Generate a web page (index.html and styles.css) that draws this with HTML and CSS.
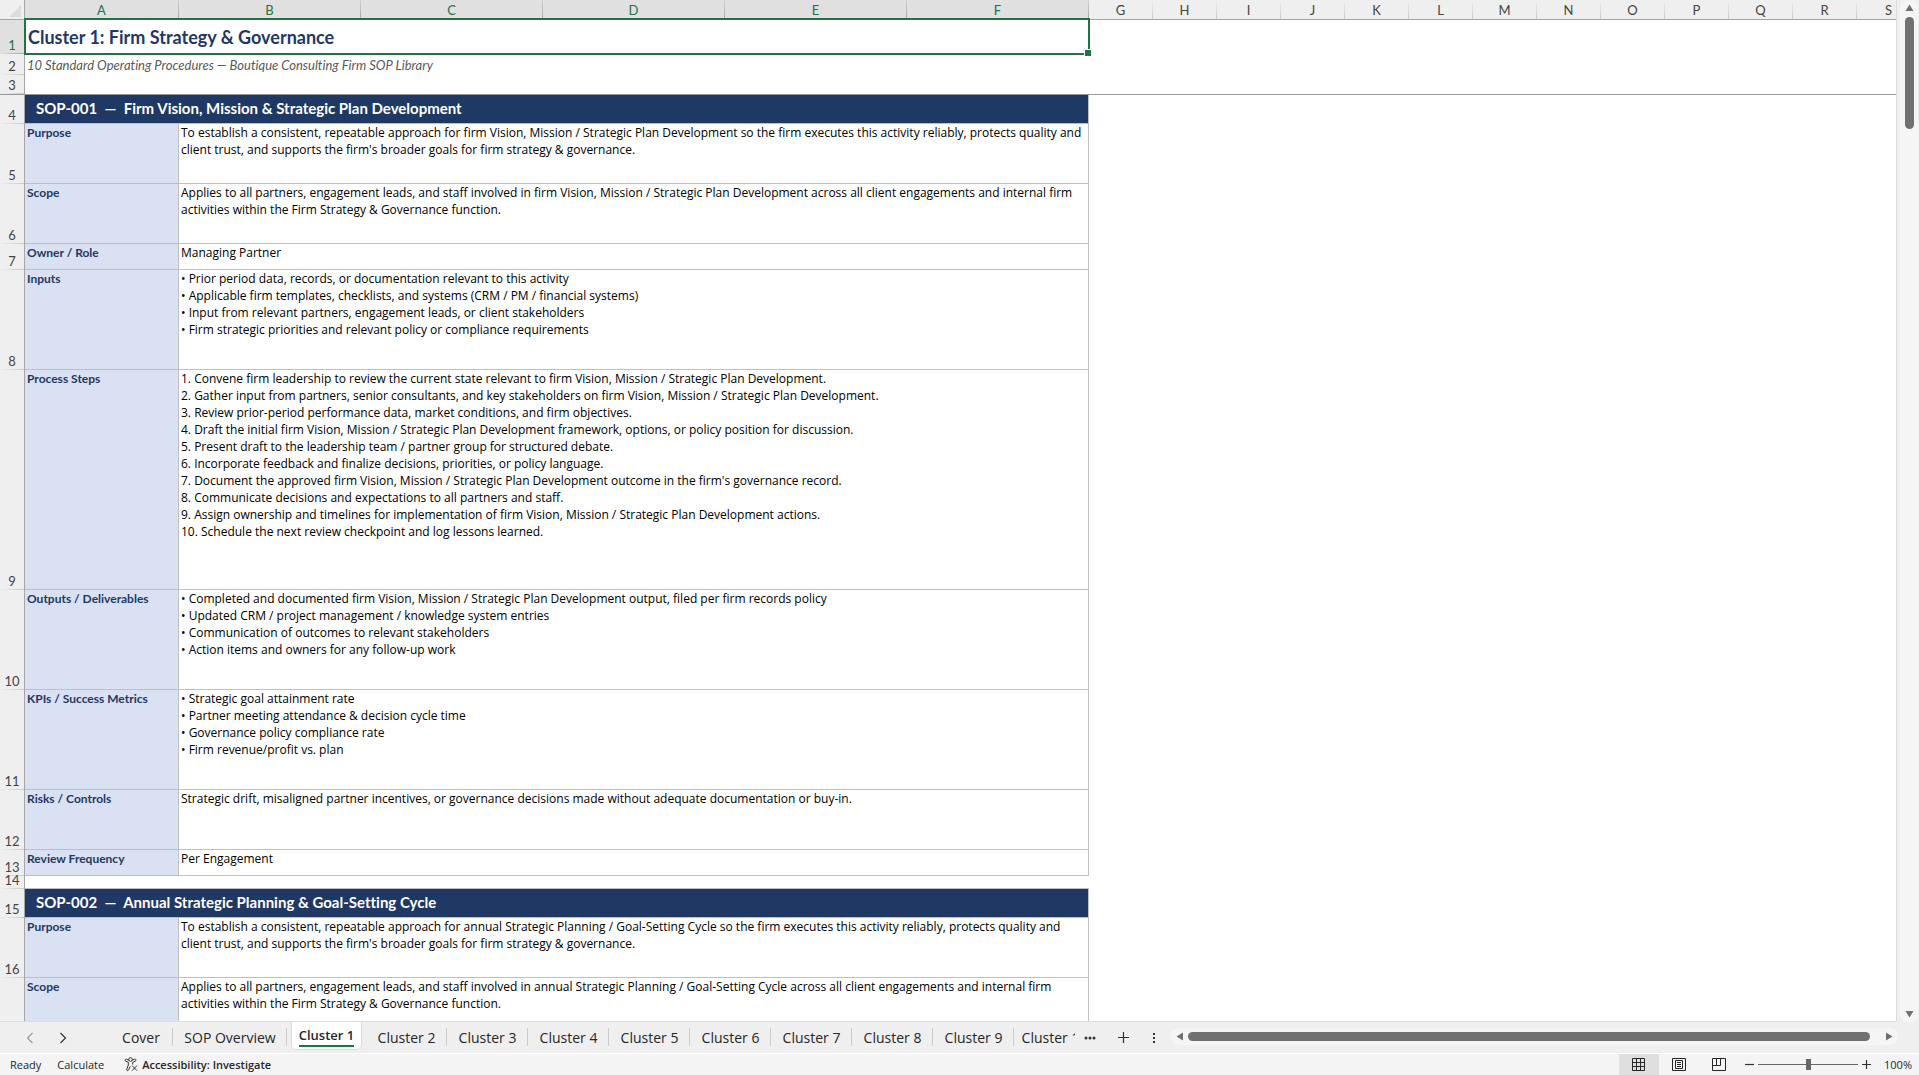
FILE: index.html
```html
<!DOCTYPE html>
<html lang="en">
<head>
    <meta charset="UTF-8">
    <meta name="viewport" content="width=device-width, initial-scale=1.0">
    <title>SOP Library - Cluster 1</title>
    <link rel="stylesheet" href="styles.css">
</head>
<body>
    <div class="workbook">
        <div class="sheet-area">
            <div class="sheet">
                <table class="grid">
                    <colgroup>
                        <col class="col-head">
                        <col class="col-label">
                        <col class="col-wide" span="5">
                        <col class="col-std" span="13">
                    </colgroup>
                    <thead>
                        <tr class="letters">
                            <th class="corner"><svg width="12" height="12" viewBox="0 0 12 12"><path d="M12 0V12H0Z" fill="#dcdcdc"/></svg></th>
                            <th class="selected">A</th>
                            <th class="selected">B</th>
                            <th class="selected">C</th>
                            <th class="selected">D</th>
                            <th class="selected">E</th>
                            <th class="selected">F</th>
                            <th>G</th>
                            <th>H</th>
                            <th>I</th>
                            <th>J</th>
                            <th>K</th>
                            <th>L</th>
                            <th>M</th>
                            <th>N</th>
                            <th>O</th>
                            <th>P</th>
                            <th>Q</th>
                            <th>R</th>
                            <th>S</th>
                        </tr>
                        <tr class="row-title">
                            <th class="num selected">1</th>
                            <td class="title" colspan="6">Cluster 1: Firm Strategy &amp; Governance<span class="selection"></span></td>
                            <td colspan="13"></td>
                        </tr>
                        <tr class="row-subtitle">
                            <th class="num">2</th>
                            <td class="subtitle" colspan="6">10 Standard Operating Procedures — Boutique Consulting Firm SOP Library</td>
                            <td colspan="13"></td>
                        </tr>
                        <tr class="row-frozen">
                            <th class="num">3</th>
                            <td colspan="19"></td>
                        </tr>
                    </thead>
                    <tbody>
                        <tr class="row-banner">
                            <th class="num">4</th>
                            <td class="banner" colspan="6">SOP-001&nbsp; —&nbsp; Firm Vision, Mission &amp; Strategic Plan Development</td>
                        </tr>
                        <tr class="row-medium">
                            <th class="num">5</th>
                            <td class="label">Purpose</td>
                            <td class="text" colspan="5">To establish a consistent, repeatable approach for firm Vision, Mission / Strategic Plan Development so the firm executes this activity reliably, protects quality and<br>client trust, and supports the firm's broader goals for firm strategy &amp; governance.</td>
                        </tr>
                        <tr class="row-medium">
                            <th class="num">6</th>
                            <td class="label">Scope</td>
                            <td class="text" colspan="5">Applies to all partners, engagement leads, and staff involved in firm Vision, Mission / Strategic Plan Development across all client engagements and internal firm<br>activities within the Firm Strategy &amp; Governance function.</td>
                        </tr>
                        <tr class="row-small">
                            <th class="num">7</th>
                            <td class="label">Owner / Role</td>
                            <td class="text" colspan="5">Managing Partner</td>
                        </tr>
                        <tr class="row-large">
                            <th class="num">8</th>
                            <td class="label">Inputs</td>
                            <td class="text" colspan="5">
                                • Prior period data, records, or documentation relevant to this activity<br>
                                • Applicable firm templates, checklists, and systems (CRM / PM / financial systems)<br>
                                • Input from relevant partners, engagement leads, or client stakeholders<br>
                                • Firm strategic priorities and relevant policy or compliance requirements
                            </td>
                        </tr>
                        <tr class="row-steps">
                            <th class="num">9</th>
                            <td class="label">Process Steps</td>
                            <td class="text" colspan="5">
                                1. Convene firm leadership to review the current state relevant to firm Vision, Mission / Strategic Plan Development.<br>
                                2. Gather input from partners, senior consultants, and key stakeholders on firm Vision, Mission / Strategic Plan Development.<br>
                                3. Review prior-period performance data, market conditions, and firm objectives.<br>
                                4. Draft the initial firm Vision, Mission / Strategic Plan Development framework, options, or policy position for discussion.<br>
                                5. Present draft to the leadership team / partner group for structured debate.<br>
                                6. Incorporate feedback and finalize decisions, priorities, or policy language.<br>
                                7. Document the approved firm Vision, Mission / Strategic Plan Development outcome in the firm's governance record.<br>
                                8. Communicate decisions and expectations to all partners and staff.<br>
                                9. Assign ownership and timelines for implementation of firm Vision, Mission / Strategic Plan Development actions.<br>
                                10. Schedule the next review checkpoint and log lessons learned.
                            </td>
                        </tr>
                        <tr class="row-large">
                            <th class="num">10</th>
                            <td class="label">Outputs / Deliverables</td>
                            <td class="text" colspan="5">
                                • Completed and documented firm Vision, Mission / Strategic Plan Development output, filed per firm records policy<br>
                                • Updated CRM / project management / knowledge system entries<br>
                                • Communication of outcomes to relevant stakeholders<br>
                                • Action items and owners for any follow-up work
                            </td>
                        </tr>
                        <tr class="row-large">
                            <th class="num">11</th>
                            <td class="label">KPIs / Success Metrics</td>
                            <td class="text" colspan="5">
                                • Strategic goal attainment rate<br>
                                • Partner meeting attendance &amp; decision cycle time<br>
                                • Governance policy compliance rate<br>
                                • Firm revenue/profit vs. plan
                            </td>
                        </tr>
                        <tr class="row-medium">
                            <th class="num">12</th>
                            <td class="label">Risks / Controls</td>
                            <td class="text" colspan="5">Strategic drift, misaligned partner incentives, or governance decisions made without adequate documentation or buy-in.</td>
                        </tr>
                        <tr class="row-small">
                            <th class="num">13</th>
                            <td class="label">Review Frequency</td>
                            <td class="text" colspan="5">Per Engagement</td>
                        </tr>
                        <tr class="row-spacer">
                            <th class="num">14</th>
                            <td class="spacer" colspan="6"></td>
                        </tr>
                        <tr class="row-banner">
                            <th class="num">15</th>
                            <td class="banner" colspan="6">SOP-002&nbsp; —&nbsp; Annual Strategic Planning &amp; Goal-Setting Cycle</td>
                        </tr>
                        <tr class="row-medium">
                            <th class="num">16</th>
                            <td class="label">Purpose</td>
                            <td class="text" colspan="5">To establish a consistent, repeatable approach for annual Strategic Planning / Goal-Setting Cycle so the firm executes this activity reliably, protects quality and<br>client trust, and supports the firm's broader goals for firm strategy &amp; governance.</td>
                        </tr>
                        <tr class="row-medium">
                            <th class="num"></th>
                            <td class="label">Scope</td>
                            <td class="text" colspan="5">Applies to all partners, engagement leads, and staff involved in annual Strategic Planning / Goal-Setting Cycle across all client engagements and internal firm<br>activities within the Firm Strategy &amp; Governance function.</td>
                        </tr>
                    </tbody>
                </table>
            </div>
            <div class="scroll-v">
                <button class="scroll-button" aria-label="Scroll up"><svg width="9" height="8" viewBox="0 0 9 8"><path d="M4.5 0.5L8.5 7H0.5Z"/></svg></button>
                <div class="thumb-v"></div>
                <button class="scroll-button" aria-label="Scroll down"><svg width="9" height="8" viewBox="0 0 9 8"><path d="M4.5 7.5L8.5 1H0.5Z"/></svg></button>
            </div>
        </div>

        <div class="tab-bar">
            <div class="tabs">
                <div class="tab-nav">
                    <button class="icon-button muted" aria-label="Previous sheet"><svg width="8" height="12" viewBox="0 0 8 12"><path d="M6.5 1L1.5 6L6.5 11"/></svg></button>
                    <button class="icon-button" aria-label="Next sheet"><svg width="8" height="12" viewBox="0 0 8 12"><path d="M1.5 1L6.5 6L1.5 11"/></svg></button>
                </div>
                <button class="tab tab-cover">Cover</button>
                <button class="tab tab-overview">SOP Overview</button>
                <button class="tab active"><span>Cluster 1</span></button>
                <button class="tab">Cluster 2</button>
                <button class="tab">Cluster 3</button>
                <button class="tab">Cluster 4</button>
                <button class="tab">Cluster 5</button>
                <button class="tab">Cluster 6</button>
                <button class="tab">Cluster 7</button>
                <button class="tab">Cluster 8</button>
                <button class="tab">Cluster 9</button>
                <button class="tab">Cluster 10</button>
            </div>
            <div class="tab-tools">
                <button class="icon-button" aria-label="More sheets"><svg width="12" height="4" viewBox="0 0 12 4"><g class="dots"><circle cx="2" cy="2" r="1.5"/><circle cx="6" cy="2" r="1.5"/><circle cx="10" cy="2" r="1.5"/></g></svg></button>
                <button class="icon-button" aria-label="New sheet"><svg width="11" height="11" viewBox="0 0 11 11"><path d="M5.5 0V11M0 5.5H11"/></svg></button>
                <button class="icon-button" aria-label="Resize tabs"><svg width="4" height="12" viewBox="0 0 4 12"><g class="dots"><rect x="1" y="1" width="2" height="2"/><rect x="1" y="5" width="2" height="2"/><rect x="1" y="9" width="2" height="2"/></g></svg></button>
            </div>
            <div class="scroll-h">
                <button class="scroll-button" aria-label="Scroll left"><svg width="8" height="9" viewBox="0 0 8 9"><path d="M0.5 4.5L7 0.5V8.5Z"/></svg></button>
                <div class="thumb-h"></div>
                <button class="scroll-button" aria-label="Scroll right"><svg width="8" height="9" viewBox="0 0 8 9"><path d="M7.5 4.5L1 0.5V8.5Z"/></svg></button>
            </div>
        </div>

        <div class="status-bar">
            <span class="status-text">Ready</span>
            <span class="status-text">Calculate</span>
            <button class="accessibility">
                <svg width="14" height="15" viewBox="0 0 14 15"><circle cx="6.5" cy="2.5" r="1.8"/><path d="M4.8 3.2L2.4 2.2C.9 1.8.4 3.6 1.8 4.2L4.3 5.3V8L2.8 12.2C2.5 13.7 4 14.2 4.6 12.9L6.2 9.5M8.2 3.2L10.6 2.2C12.1 1.8 12.6 3.6 11.2 4.2L8.7 5.3V7.5M8 8.5L13 13.7M13 8.5L8 13.7"/></svg>
                Accessibility: Investigate
            </button>
            <div class="views">
                <button class="view active" aria-label="Normal"><svg width="14" height="14" viewBox="0 0 14 14"><path d="M.5 .5H12.5V12.5H.5ZM4.5 1V12M8.5 1V12M1 4.5H12M1 8.5H12"/></svg></button>
                <button class="view" aria-label="Page layout"><svg width="14" height="14" viewBox="0 0 14 14"><path d="M.5 .5H13.5V12.5H.5ZM3.5 2.5H10.5V10.5H3.5ZM5 4.5H9M5 6.5H9M5 8.5H9"/></svg></button>
                <button class="view" aria-label="Page break preview"><svg width="14" height="14" viewBox="0 0 14 14"><path d="M.5 .5H13.5V12.5H.5ZM4.5 1V7.5M8.5 1V7.5M1 7.5H8.5"/></svg></button>
            </div>
            <div class="zoom">
                <button class="icon-button" aria-label="Zoom out"><svg width="9" height="9" viewBox="0 0 9 9"><path d="M0 4.5H9"/></svg></button>
                <input type="range" min="0" max="100" value="50" aria-label="Zoom">
                <button class="icon-button" aria-label="Zoom in"><svg width="9" height="9" viewBox="0 0 9 9"><path d="M0 4.5H9M4.5 0V9"/></svg></button>
                <button class="zoom-value">100%</button>
            </div>
        </div>
    </div>
</body>
</html>
```

FILE: styles.css
```css
:root {
    --navy: #1f3864;
    --label-bg: #d9e1f2;
    --green: #217346;
    --chrome: #efefef;
    --chrome-light: #f5f5f5;
    --line: #bfbfbf;
    --freeze: #999999;
    --thumb: #707070;
}
* {
    box-sizing: border-box;
}
body {
    margin: 0;
    font-family: 'Open Sans', 'Noto Sans', sans-serif;
    color: #262626;
    background-color: var(--chrome);
}
button {
    font: inherit;
    color: inherit;
    border: none;
    background: none;
    padding: 0;
    cursor: pointer;
}
svg {
    display: block;
}
.workbook {
    display: flex;
    flex-direction: column;
    height: 100vh;
    overflow: hidden;
}

/* Sheet */
.sheet-area {
    flex: 1;
    min-height: 0;
    display: flex;
}
.sheet {
    flex: 1;
    min-width: 0;
    overflow: hidden;
    background-color: white;
    border-right: 1px solid #dcdcdc;
    border-bottom: 1px solid #dcdcdc;
}
.grid {
    width: calc(25px + 154px + 5 * 182px + 13 * 64px);
    table-layout: fixed;
    border-collapse: separate;
    border-spacing: 0;
    font-family: 'Lato', sans-serif;
    font-size: 12px;
    font-variant-ligatures: none;
    line-height: 17px;
    color: black;
}
.col-head {
    width: 25px;
}
.col-label {
    width: 154px;
}
.col-wide {
    width: 182px;
}
.col-std {
    width: 64px;
}
.grid th,
.grid td {
    padding: 0;
    font-weight: 400;
    white-space: nowrap;
}
.letters th {
    height: 20px;
    padding: 2px 1px 0 0;
    font-size: 13px;
    line-height: 17px;
    color: #444444;
    border-bottom: 1px solid #a6a6a6;
    background: linear-gradient(var(--chrome), #c8c8c8) right / 1px 100% no-repeat var(--chrome);
}
.letters .selected {
    color: var(--green);
    background: linear-gradient(#d0d0d0, #a6a6a6) right / 1px 100% no-repeat #e0e0e0;
}
.letters .corner {
    background: var(--chrome);
    border-right: 1px solid #a6a6a6;
}
.corner svg {
    margin-left: 9px;
}
.grid .num {
    padding-bottom: 4px;
    vertical-align: bottom;
    font-size: 13px;
    line-height: 9px;
    color: #444444;
    border-right: 1px solid #a6a6a6;
    background: linear-gradient(to right, var(--chrome), #c8c8c8) bottom / 100% 1px no-repeat var(--chrome);
}
.grid .num.selected {
    color: var(--green);
    background: linear-gradient(to right, #e0e0e0, #a6a6a6) bottom / 100% 1px no-repeat #e0e0e0;
}
.row-title {
    height: 34px;
}
.row-subtitle {
    height: 21px;
}
.row-frozen {
    height: 20px;
}
.row-banner {
    height: 29px;
}
.row-small {
    height: 26px;
}
.row-medium {
    height: 60px;
}
.row-large {
    height: 100px;
}
.row-steps {
    height: 220px;
}
.row-spacer {
    height: 13px;
}
.row-frozen th,
.row-frozen td {
    border-bottom: 1px solid var(--freeze);
}
.grid .title {
    position: relative;
    padding-left: 3px;
    font-size: 18px;
    font-weight: 700;
    color: var(--navy);
}
.selection {
    position: absolute;
    inset: -2px -1px -1px -1px;
    border: 2px solid var(--green);
}
.selection::after {
    content: "";
    position: absolute;
    right: -3px;
    bottom: -3px;
    width: 6px;
    height: 6px;
    border: 1px solid white;
    border-width: 1px 0 0 1px;
    background-color: var(--green);
}
.grid .subtitle {
    padding: 2px 0 0 2px;
    font-size: 13px;
    font-style: italic;
    color: #595959;
}
.grid .banner {
    padding: 0 0 1px 11px;
    font-size: 15px;
    font-weight: 700;
    color: white;
    background-color: var(--navy);
    border-right: 1px solid var(--line);
    border-bottom: 1px solid var(--line);
}
.grid .label,
.grid .text {
    padding: 0 2px;
    vertical-align: top;
    border-right: 1px solid var(--line);
    border-bottom: 1px solid var(--line);
}
.grid .text {
    font-family: 'Open Sans', 'Noto Sans', sans-serif;
}
.grid .label {
    font-weight: 700;
    color: var(--navy);
    background-color: var(--label-bg);
}
.grid .spacer {
    border-bottom: 1px solid var(--line);
}

/* Scrollbars */
.scroll-v {
    width: 18px;
    margin: 0 1px 0 3px;
    padding: 4px 0;
    display: flex;
    flex-direction: column;
    align-items: center;
    border-radius: 8px;
    background-color: var(--chrome-light);
}
.scroll-v .scroll-button:last-child {
    margin-top: auto;
}
.scroll-button {
    fill: var(--thumb);
}
.thumb-v {
    width: 9px;
    height: 11%;
    margin-top: 5px;
    border-radius: 5px;
    background-color: var(--thumb);
}
.scroll-h {
    flex: 1;
    height: 17px;
    margin: 6px 21px 0 0;
    padding: 0 5px;
    display: flex;
    align-items: center;
    border-radius: 8px;
    background-color: var(--chrome-light);
}
.thumb-h {
    flex: 1;
    height: 9px;
    margin: 0 15px 0 4px;
    border-radius: 5px;
    background-color: var(--thumb);
}

/* Sheet tabs */
.tab-bar {
    display: flex;
    height: 31px;
    font-size: 14px;
}
.tabs {
    width: 56%;
    display: flex;
    overflow: hidden;
}
.tab-nav {
    flex: none;
    width: 109px;
    padding: 0 18px 0 26px;
    display: flex;
    gap: 25px;
}
.icon-button svg {
    fill: none;
    stroke: #333333;
    stroke-width: 1.2;
}
.icon-button .dots {
    fill: #333333;
    stroke: none;
}
.icon-button.muted svg {
    stroke: #999999;
}
.tab {
    flex: none;
    width: 81px;
    white-space: nowrap;
    background: linear-gradient(#cccccc, #cccccc) right 6px / 1px 18px no-repeat;
}
.tab-cover {
    width: 64px;
}
.tab-overview {
    width: 114px;
}
.tab.active {
    width: 71px;
    height: 28px;
    margin: 0 4px;
    font-size: 13px;
    font-weight: 600;
    border: 1px solid #dcdcdc;
    border-top: none;
    border-radius: 0 0 5px 5px;
    background: white;
}
.tab.active span {
    display: inline-block;
    line-height: 20px;
    border-bottom: 2px solid #107c41;
}
.tab-tools {
    width: 96px;
    padding: 0 15px 0 9px;
    display: flex;
    justify-content: space-between;
}

/* Status bar */
.status-bar {
    height: 22px;
    display: flex;
    align-items: center;
    font-size: 11px;
    background-color: #f4f4f4;
    border-top: 1px solid white;
}
.status-text {
    margin-left: 10px;
}
.status-text + .status-text {
    margin-left: 16px;
}
.accessibility {
    display: flex;
    align-items: center;
    gap: 4px;
    margin-left: 20px;
    font-weight: 600;
}
.accessibility svg {
    fill: none;
    stroke: #333333;
}
.views {
    height: 100%;
    margin-left: auto;
    display: flex;
}
.view {
    width: 40px;
    display: flex;
    align-items: center;
    justify-content: center;
}
.view svg {
    fill: none;
    stroke: #262626;
}
.view.active {
    background-color: #dfdfdf;
}
.zoom {
    display: flex;
    align-items: center;
    gap: 4px;
    margin: 0 7px 0 6px;
}
.zoom input {
    appearance: none;
    width: 100px;
    height: 11px;
    margin: 0;
    background: linear-gradient(#666666, #666666) center / 100% 1px no-repeat;
}
.zoom input::-webkit-slider-thumb {
    appearance: none;
    width: 5px;
    height: 11px;
    background-color: #666666;
}
.zoom-value {
    margin-left: 9px;
}
```
